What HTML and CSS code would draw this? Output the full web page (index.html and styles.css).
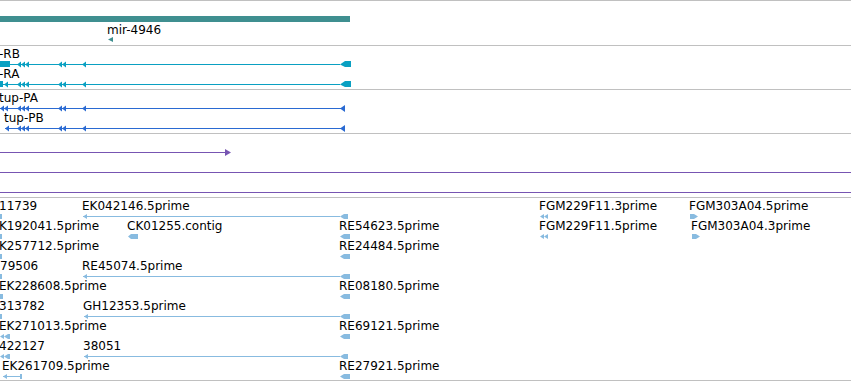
FILE: index.html
```html
<!DOCTYPE html>
<html>
<head>
  <link rel="stylesheet" href="styles.css">
</head>
<body>
  <div class="tracks">

    <!-- gene span + mirna -->
    <div class="track track_gene">
      <svg width="851" height="44" viewBox="0 1 851 44">
        <rect class="f" x="0" y="16" width="350" height="6"/>
        <text class="lbl" x="107" y="34">mir-4946</text>
        <polygon class="f" points="108,39.5 113,37 113,42"/>
      </svg>
    </div>

    <!-- transcripts -->
    <div class="track track_rna">
      <svg width="851" height="43" viewBox="0 46 851 43">
        <text class="lbl" x="-1" y="58">-RB</text>
        <rect class="f" x="0" y="64" width="340" height="1"/>
        <rect class="f" x="0" y="61" width="10" height="6"/>
        <polygon class="f" points="17,64.5 21,61.5 21,67.5"/>
        <polygon class="f" points="21,64.5 25,61.5 25,67.5"/>
        <polygon class="f" points="25,64.5 29,61.5 29,67.5"/>
        <polygon class="f" points="58,64.5 62,61.5 62,67.5"/>
        <polygon class="f" points="62,64.5 66,61.5 66,67.5"/>
        <polygon class="f" points="82,64.5 86,61.5 86,67.5"/>
        <polygon class="f" points="340,64.5 345,61 351,61 351,67 345,67"/>

        <text class="lbl" x="-1" y="78">-RA</text>
        <rect class="f" x="0" y="84" width="340" height="1"/>
        <rect class="f" x="0" y="81" width="3" height="6"/>
        <polygon class="f" points="4,84.5 8,81.5 8,87.5"/>
        <polygon class="f" points="17,84.5 21,81.5 21,87.5"/>
        <polygon class="f" points="21,84.5 25,81.5 25,87.5"/>
        <polygon class="f" points="25,84.5 29,81.5 29,87.5"/>
        <polygon class="f" points="58,84.5 62,81.5 62,87.5"/>
        <polygon class="f" points="62,84.5 66,81.5 66,87.5"/>
        <polygon class="f" points="82,84.5 86,81.5 86,87.5"/>
        <polygon class="f" points="340,84.5 345,81 351,81 351,87 345,87"/>
      </svg>
    </div>

    <!-- proteins -->
    <div class="track track_prot">
      <svg width="851" height="43" viewBox="0 90 851 43">
        <text class="lbl" x="-1" y="102">tup-PA</text>
        <rect class="f" x="0" y="108" width="344" height="1"/>
        <polygon class="f" points="0,108.5 4,105.5 4,111.5"/>
        <polygon class="f" points="4,108.5 8,105.5 8,111.5"/>
        <polygon class="f" points="17,108.5 21,105.5 21,111.5"/>
        <polygon class="f" points="21,108.5 25,105.5 25,111.5"/>
        <polygon class="f" points="25,108.5 29,105.5 29,111.5"/>
        <polygon class="f" points="58,108.5 62,105.5 62,111.5"/>
        <polygon class="f" points="62,108.5 66,105.5 66,111.5"/>
        <polygon class="f" points="82,108.5 86,105.5 86,111.5"/>
        <polygon class="f" points="340,108.5 345,105 345,112"/>

        <text class="lbl" x="4" y="122">tup-PB</text>
        <rect class="f" x="5" y="128" width="339" height="1"/>
        <polygon class="f" points="5,128.5 9,125.5 9,131.5"/>
        <polygon class="f" points="17,128.5 21,125.5 21,131.5"/>
        <polygon class="f" points="21,128.5 25,125.5 25,131.5"/>
        <polygon class="f" points="25,128.5 29,125.5 29,131.5"/>
        <polygon class="f" points="58,128.5 62,125.5 62,131.5"/>
        <polygon class="f" points="62,128.5 66,125.5 66,131.5"/>
        <polygon class="f" points="82,128.5 86,125.5 86,131.5"/>
        <polygon class="f" points="340,128.5 345,125 345,132"/>
      </svg>
    </div>

    <!-- long spans -->
    <div class="track track_span">
      <svg width="851" height="63" viewBox="0 134 851 63">
        <rect class="f" x="0" y="152" width="226" height="1"/>
        <polygon class="f" points="225,149 231,152.5 225,156"/>
        <rect class="f" x="0" y="172" width="851" height="1"/>
        <rect class="f" x="0" y="192" width="851" height="1"/>
      </svg>
    </div>

    <!-- est reads -->
    <div class="track track_est">
      <svg width="851" height="182" viewBox="0 198 851 182">
        <!-- row 1 -->
        <text class="lbl" x="-1" y="210">11739</text>
        <rect class="f" x="0" y="214" width="2" height="5"/>
        <text class="lbl" x="82" y="210">EK042146.5prime</text>
        <rect class="f" x="83" y="216" width="257" height="1"/>
        <polygon class="f" points="83,216.5 87,214 87,219"/>
        <polygon class="f" points="340,216.5 344,214 348,214 348,219 344,219"/>
        <text class="lbl" x="539" y="210">FGM229F11.3prime</text>
        <polygon class="f" points="540,216.5 544,214 544,219"/>
        <polygon class="f" points="544,216.5 548,214 548,219"/>
        <text class="lbl" x="689" y="210">FGM303A04.5prime</text>
        <polygon class="f" points="690,214 694,214 698,216.5 694,219 690,219"/>

        <!-- row 2 -->
        <text class="lbl" x="-1" y="230">K192041.5prime</text>
        <rect class="f" x="0" y="234" width="2" height="5"/>
        <text class="lbl" x="127" y="230">CK01255.contig</text>
        <polygon class="f" points="128,236.5 131,234 138,234 138,239 131,239"/>
        <text class="lbl" x="339" y="230">RE54623.5prime</text>
        <polygon class="f" points="340,236.5 344,234 350,234 350,239 344,239"/>
        <text class="lbl" x="539" y="230">FGM229F11.5prime</text>
        <polygon class="f" points="540,236.5 544,234 544,239"/>
        <polygon class="f" points="544,236.5 548,234 548,239"/>
        <text class="lbl" x="691" y="230">FGM303A04.3prime</text>
        <polygon class="f" points="692,234 696,234 700,236.5 696,239 692,239"/>

        <!-- row 3 -->
        <text class="lbl" x="-1" y="250">K257712.5prime</text>
        <rect class="f" x="0" y="254" width="2" height="5"/>
        <text class="lbl" x="339" y="250">RE24484.5prime</text>
        <polygon class="f" points="340,256.5 344,254 350,254 350,259 344,259"/>

        <!-- row 4 -->
        <text class="lbl" x="0" y="270">79506</text>
        <rect class="f" x="0" y="274" width="2" height="5"/>
        <text class="lbl" x="82" y="270">RE45074.5prime</text>
        <rect class="f" x="83" y="276" width="257" height="1"/>
        <polygon class="f" points="83,276.5 87,274 87,279"/>
        <polygon class="f" points="340,276.5 344,274 350,274 350,279 344,279"/>

        <!-- row 5 -->
        <text class="lbl" x="-1" y="290">EK228608.5prime</text>
        <rect class="f" x="0" y="294" width="3" height="5"/>
        <text class="lbl" x="339" y="290">RE08180.5prime</text>
        <polygon class="f" points="340,296.5 344,294 350,294 350,299 344,299"/>

        <!-- row 6 -->
        <text class="lbl" x="-1" y="310">313782</text>
        <rect class="f" x="0" y="314" width="2" height="5"/>
        <text class="lbl" x="83" y="310">GH12353.5prime</text>
        <rect class="f" x="84" y="316" width="256" height="1"/>
        <polygon class="f" points="84,316.5 88,314 88,319"/>
        <polygon class="f" points="340,316.5 344,314 350,314 350,319 344,319"/>

        <!-- row 7 -->
        <text class="lbl" x="-1" y="330">EK271013.5prime</text>
        <polygon class="f" points="0,336.5 4,334 4,339"/>
        <polygon class="f" points="4,336.5 8,334 8,339"/>
        <rect class="f" x="8" y="334" width="2" height="5"/>
        <text class="lbl" x="339" y="330">RE69121.5prime</text>
        <polygon class="f" points="340,336.5 344,334 350,334 350,339 344,339"/>

        <!-- row 8 -->
        <text class="lbl" x="-1" y="350">422127</text>
        <polygon class="f" points="0,356.5 4,354 4,359"/>
        <polygon class="f" points="4,356.5 8,354 8,359"/>
        <rect class="f" x="8" y="354" width="2" height="5"/>
        <text class="lbl" x="83" y="350">38051</text>
        <rect class="f" x="84" y="356" width="256" height="1"/>
        <polygon class="f" points="84,356.5 88,354 88,359"/>
        <polygon class="f" points="340,356.5 344,354 348,354 348,359 344,359"/>

        <!-- row 9 -->
        <text class="lbl" x="2" y="370">EK261709.5prime</text>
        <rect class="f" x="3" y="376" width="18" height="1"/>
        <polygon class="f" points="3,376.5 7,374 7,379"/>
        <rect class="f" x="20" y="374" width="2" height="5"/>
        <text class="lbl" x="339" y="370">RE27921.5prime</text>
        <polygon class="f" points="340,376.5 344,374 350,374 350,379 344,379"/>
      </svg>
    </div>

  </div>
</body>
</html>
```

FILE: styles.css
```css
body {
  margin: 0;
  background-color: #ffffff;
  font-family: "DejaVu Sans", sans-serif;
}

.tracks {
  width: 851px;
  border-top: 1px solid #c0c0c0;
  overflow: hidden;
}

.track {
  border-bottom: 1px solid #c0c0c0;
}

.track svg {
  display: block;
}

.track_gene { height: 44px; }
.track_rna { height: 43px; }
.track_prot { height: 43px; }
.track_span { height: 63px; }
.track_est { height: 182px; }

.lbl {
  font-family: "DejaVu Sans", sans-serif;
  font-size: 12px;
  fill: #000000;
}

.track_gene .f { fill: #3f8f90; }
.track_rna .f { fill: #0aa0c2; }
.track_prot .f { fill: #2a6ad2; }
.track_span .f { fill: #7755b2; }
.track_est .f { fill: #88bbe0; }
```
